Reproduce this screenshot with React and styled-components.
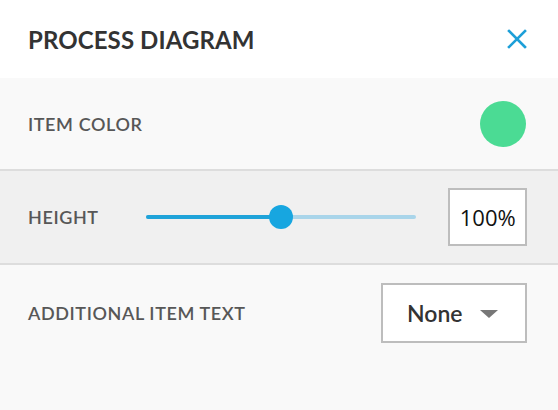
import styled, { createGlobalStyle } from 'styled-components';

const GlobalStyle = createGlobalStyle`
  html, body {
    margin: 0;
    padding: 0;
    background: #f9f9f9;
  }
  body {
    font-family: Lato, "Open Sans", sans-serif;
  }
`;

const Panel = styled.div`
  width: 558px;
  height: 410px;
  display: flex;
  flex-direction: column;
  background: #f9f9f9;
`;

const Header = styled.div`
  height: 78px;
  display: flex;
  align-items: center;
  justify-content: space-between;
  padding: 0 30px 0 28px;
  background: #ffffff;
  box-sizing: border-box;
`;

const Title = styled.h1`
  margin: 0;
  font-size: 24px;
  font-weight: 700;
  letter-spacing: 0.1px;
  color: #333333;
`;

const CloseButton = styled.button`
  border: 0;
  padding: 0;
  background: none;
  width: 22px;
  height: 22px;
  display: flex;
  align-items: center;
  justify-content: center;
  cursor: pointer;
`;

const Row = styled.div`
  display: flex;
  align-items: ${(p) => (p.$top ? 'flex-start' : 'center')};
  height: ${(p) => p.$height}px;
  padding: ${(p) => (p.$top ? '18px 31px 0 28px' : '0 31px 0 28px')};
  background: ${(p) => (p.$shaded ? '#f0f0f0' : '#f9f9f9')};
  border-bottom: ${(p) => (p.$divider ? '2px solid #dddddd' : 'none')};
  box-sizing: border-box;
  gap: 16px;
`;

const Label = styled.span`
  font-size: 18px;
  font-weight: 600;
  color: #575757;
  letter-spacing: 0.6px;
  width: ${(p) => (p.$width ? `${p.$width}px` : 'auto')};
  line-height: ${(p) => (p.$lh ? `${p.$lh}px` : 'normal')};
  flex-shrink: 0;
`;

const Spacer = styled.div`
  flex: 1;
`;

const Swatch = styled.div`
  width: 46px;
  height: 46px;
  margin-right: 1px;
  border-radius: 50%;
  background: ${(p) => p.$color};
`;

const SliderWrap = styled.div`
  width: 272px;
  height: 24px;
  position: relative;
  display: flex;
  align-items: center;
`;

const Track = styled.div`
  width: 100%;
  height: 4px;
  border-radius: 2px;
  background: #a9d5ea;
`;

const Fill = styled.div`
  position: absolute;
  left: 0;
  top: 10px;
  height: 4px;
  border-radius: 2px;
  background: #1fa3d9;
`;

const Thumb = styled.div`
  position: absolute;
  top: 0;
  width: 24px;
  height: 24px;
  margin-left: -12px;
  border-radius: 50%;
  background: #17a6e0;
`;

const ValueBox = styled.div`
  width: 79px;
  height: 58px;
  box-sizing: border-box;
  border: 2px solid #bdbdbd;
  background: #ffffff;
  display: flex;
  align-items: center;
  justify-content: center;
  font-family: "Open Sans", sans-serif;
  font-size: 22px;
  color: #111111;
`;

const Select = styled.div`
  width: 146px;
  height: 60px;
  box-sizing: border-box;
  border: 2px solid #bdbdbd;
  background: #ffffff;
  display: flex;
  align-items: center;
  padding-left: 24px;
  gap: 17px;
  font-size: 23px;
  font-weight: 600;
  color: #333333;
`;

const Caret = styled.span`
  width: 0;
  height: 0;
  border-left: 9px solid transparent;
  border-right: 9px solid transparent;
  border-top: 8px solid #777777;
  margin-top: 2px;
`;

const Slider = ({ value }) => (
  <SliderWrap>
    <Track />
    <Fill style={{ width: `${value}%` }} />
    <Thumb style={{ left: `${value}%` }} />
  </SliderWrap>
);

export default function App() {
  return (
    <Panel>
      <GlobalStyle />
      <Header>
        <Title>PROCESS DIAGRAM</Title>
        <CloseButton aria-label="Close">
          <svg width="20" height="20" viewBox="0 0 20 20">
            <path d="M2 2 L18 18 M18 2 L2 18" stroke="#1d9fd8" strokeWidth="2.6" strokeLinecap="square" />
          </svg>
        </CloseButton>
      </Header>
      <Row $height={93} $divider>
        <Label>ITEM COLOR</Label>
        <Spacer />
        <Swatch $color="#4bdb94" />
      </Row>
      <Row $height={94} $shaded $divider>
        <Label $width={102}>HEIGHT</Label>
        <Slider value={50} />
        <Spacer />
        <ValueBox>100%</ValueBox>
      </Row>
      <Row $height={145} $top>
        <Label $lh={60}>ADDITIONAL ITEM TEXT</Label>
        <Spacer />
        <Select>
          None
          <Caret />
        </Select>
      </Row>
    </Panel>
  );
}
